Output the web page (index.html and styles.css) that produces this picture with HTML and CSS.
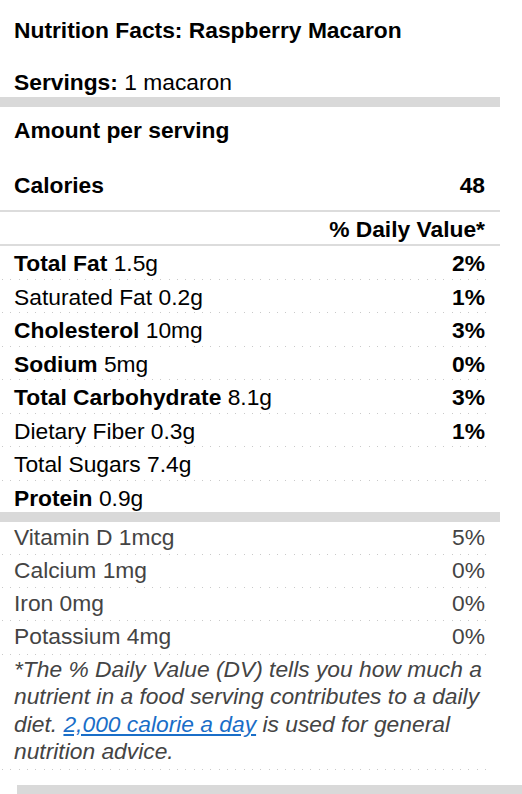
FILE: index.html
```html
<!DOCTYPE html>
<html lang="en">
<head>
<meta charset="utf-8">
<title>Nutrition Facts: Raspberry Macaron</title>
<link rel="stylesheet" href="styles.css">
</head>
<body>
<div class="label">
  <h1 class="title">Nutrition Facts: Raspberry Macaron</h1>
  <p class="servings"><b>Servings:</b> 1 macaron</p>
  <div class="bar"></div>
  <p class="amount">Amount per serving</p>
  <div class="calories"><span>Calories</span><span>48</span></div>
  <div class="rule"></div>
  <div class="dv">% Daily Value*</div>
  <div class="rule rule-b"></div>
  <ul class="rows">
    <li class="row"><span><b>Total Fat</b> 1.5g</span><b>2%</b></li>
    <li class="row"><span>Saturated Fat 0.2g</span><b>1%</b></li>
    <li class="row"><span><b>Cholesterol</b> 10mg</span><b>3%</b></li>
    <li class="row"><span><b>Sodium</b> 5mg</span><b>0%</b></li>
    <li class="row"><span><b>Total Carbohydrate</b> 8.1g</span><b>3%</b></li>
    <li class="row"><span>Dietary Fiber 0.3g</span><b>1%</b></li>
    <li class="row"><span>Total Sugars 7.4g</span></li>
    <li class="row row-last"><span><b>Protein</b> 0.9g</span></li>
  </ul>
  <div class="bar"></div>
  <ul class="rows vitamins">
    <li class="row"><span>Vitamin D 1mcg</span><span>5%</span></li>
    <li class="row"><span>Calcium 1mg</span><span>0%</span></li>
    <li class="row"><span>Iron 0mg</span><span>0%</span></li>
    <li class="row"><span>Potassium 4mg</span><span>0%</span></li>
  </ul>
  <p class="footnote">*The % Daily Value (DV) tells you how much a nutrient in a food serving contributes to a daily diet. <a href="#">2,000 calorie a day</a> is used for general nutrition advice.</p>
</div>
<div class="bottom-bar"></div>
</body>
</html>
```

FILE: styles.css
```css
html, body {
  margin: 0;
  padding: 0;
  background: #fff;
}

.label {
  width: 500px;
  font-family: "Liberation Sans", Arial, sans-serif;
  font-size: 22.8px;
  color: #000;
}

.title {
  margin: 0;
  padding: 17px 14px 0;
  font-size: 22.8px;
  line-height: 26px;
  font-weight: bold;
}

.servings {
  margin: 26px 0 0;
  padding: 0 14px;
  line-height: 26px;
}

.bar {
  height: 10px;
  margin-top: 2px;
  background: #d9d9d9;
}

.amount {
  margin: 10px 0 0;
  padding: 0 14px;
  line-height: 26px;
  font-weight: bold;
}

.calories {
  display: flex;
  justify-content: space-between;
  margin-top: 29px;
  padding: 0 15px 0 14px;
  line-height: 26px;
  font-weight: bold;
}

.rule {
  height: 2px;
  margin-top: 12px;
  background: #dcdcdc;
}

.rule-b {
  margin-top: 2px;
}

.dv {
  padding: 4px 15px 0 14px;
  line-height: 26px;
  font-weight: bold;
  text-align: right;
}

.rows {
  list-style: none;
  margin: 0;
  padding: 0;
}

.row {
  display: flex;
  justify-content: space-between;
  margin-right: 7px;
  padding: 1px 8px 0 14px;
  line-height: 32.5px;
  background-image: repeating-linear-gradient(to right, #c9c9c9 0 1px, transparent 1px 8.33px);
  background-size: 100% 1px;
  background-position: 2px bottom;
  background-repeat: no-repeat;
}

.row-last {
  height: 28px;
  background: none;
}

.vitamins .row {
  padding-top: 0;
  padding-bottom: 3px;
  line-height: 30.3px;
  color: #444;
}

.footnote {
  margin: 0 7px 0 0;
  padding: 1.5px 7px 4.5px 14px;
  font-style: italic;
  line-height: 27.3px;
  color: #444;
  background-image: repeating-linear-gradient(to right, #c9c9c9 0 1px, transparent 1px 8.33px);
  background-size: 100% 1px;
  background-position: 2px bottom;
  background-repeat: no-repeat;
}

.footnote a {
  color: #1a6ec8;
  text-decoration: underline;
}

.bottom-bar {
  height: 11px;
  margin: 15px 0 0 17px;
  background: #d9d9d9;
}
```
